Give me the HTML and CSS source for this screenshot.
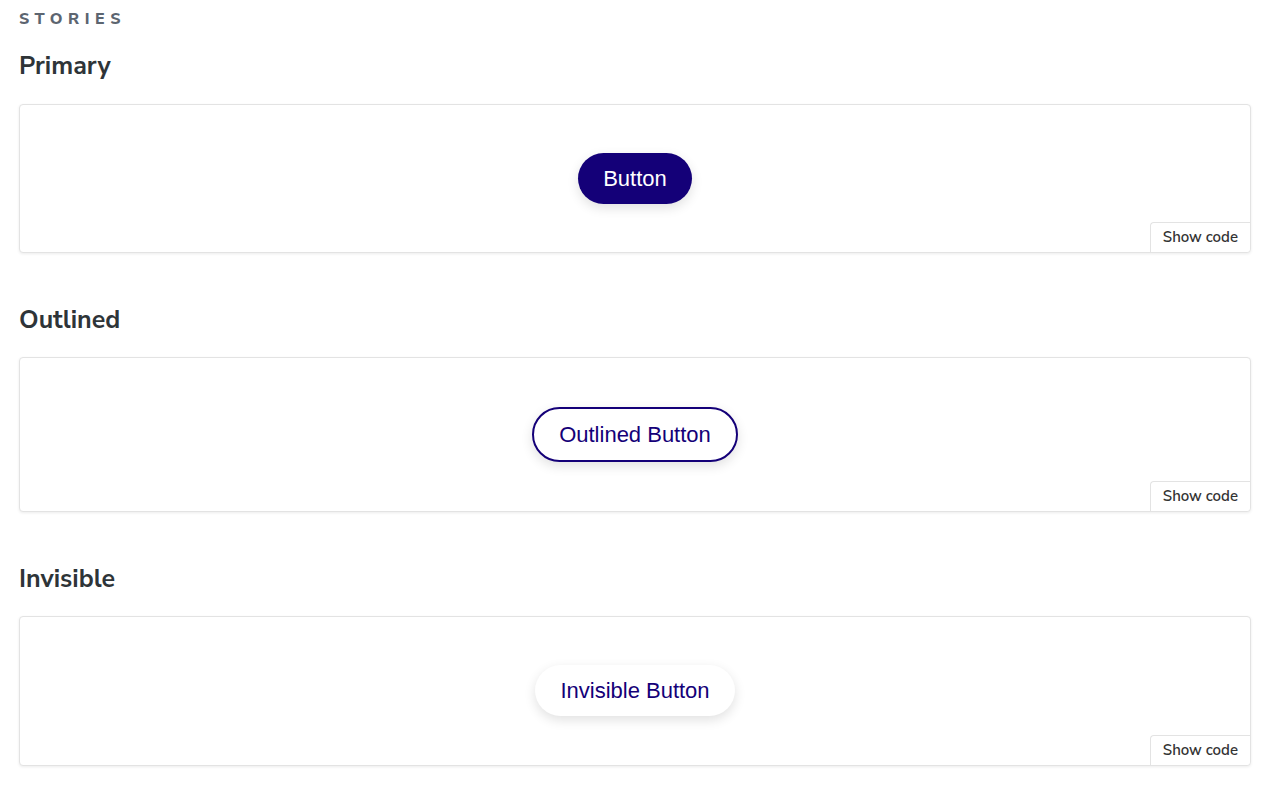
FILE: index.html
```html
<!DOCTYPE html>
<html lang="en">
<head>
<meta charset="utf-8">
<title>Stories</title>
<link rel="stylesheet" href="styles.css">
</head>
<body>
<main class="docs">
  <h2 class="subheading">Stories</h2>

  <section class="story">
    <h3 class="story-title">Primary</h3>
    <div class="preview">
      <div class="preview-body">
        <button class="btn btn-primary">Button</button>
      </div>
      <button class="show-code">Show code</button>
    </div>
  </section>

  <section class="story">
    <h3 class="story-title">Outlined</h3>
    <div class="preview">
      <div class="preview-body preview-body-tall">
        <button class="btn btn-outlined">Outlined Button</button>
      </div>
      <button class="show-code">Show code</button>
    </div>
  </section>

  <section class="story">
    <h3 class="story-title">Invisible</h3>
    <div class="preview">
      <div class="preview-body preview-body-last">
        <button class="btn btn-invisible">Invisible Button</button>
      </div>
      <button class="show-code">Show code</button>
    </div>
  </section>
</main>
</body>
</html>
```

FILE: styles.css
```css
html, body {
  margin: 0;
  padding: 0;
  background: #ffffff;
}

body {
  font-family: "Nunito Sans", "Lato", "Open Sans", sans-serif;
  color: #333333;
}

.docs {
  padding: 10px 21px 0 19px;
}

.subheading {
  margin: 0;
  font-size: 16px;
  line-height: 18px;
  font-weight: 800;
  letter-spacing: 0.35em;
  text-transform: uppercase;
  color: #5c6570;
}

.story {
  margin-bottom: 52px;
}

.story-title {
  margin: 23px 0 23px 0;
  font-size: 25px;
  line-height: 30px;
  font-weight: 700;
  color: #2e3438;
}

.story + .story .story-title {
  margin: 24px 0 22px 0;
}

.preview {
  position: relative;
  border: 1px solid #e3e3e3;
  border-radius: 4px;
  box-shadow: 0 1px 3px rgba(0, 0, 0, 0.08);
  background: #ffffff;
}

.preview-body {
  display: flex;
  justify-content: center;
  align-items: center;
  padding: 48px 20px;
}

.preview-body-tall {
  padding: 49px 20px;
}

.preview-body-last {
  padding: 48px 20px 49px;
}

.btn {
  font-family: "Liberation Sans", Arial, sans-serif;
  font-size: 22px;
  line-height: 25px;
  padding: 13px 25px;
  border-radius: 30px;
  cursor: pointer;
  box-shadow: 0 4px 12px rgba(0, 0, 0, 0.12);
}

.btn-primary {
  background: #140078;
  color: #ffffff;
  border: 0;
}

.btn-outlined {
  background: #ffffff;
  color: #140078;
  border: 2px solid #140078;
}

.btn-invisible {
  background: #ffffff;
  color: #140078;
  border: 0;
}

.show-code {
  position: absolute;
  right: 0;
  bottom: 0;
  margin: 0;
  padding: 6px 12px 7px;
  font-family: "Nunito Sans", "Lato", "Open Sans", sans-serif;
  font-size: 15px;
  line-height: 16px;
  font-weight: 600;
  color: #333333;
  background: #ffffff;
  border: 1px solid #e3e3e3;
  border-right: 0;
  border-bottom: 0;
  border-radius: 4px 0 4px 0;
  cursor: pointer;
}
```
